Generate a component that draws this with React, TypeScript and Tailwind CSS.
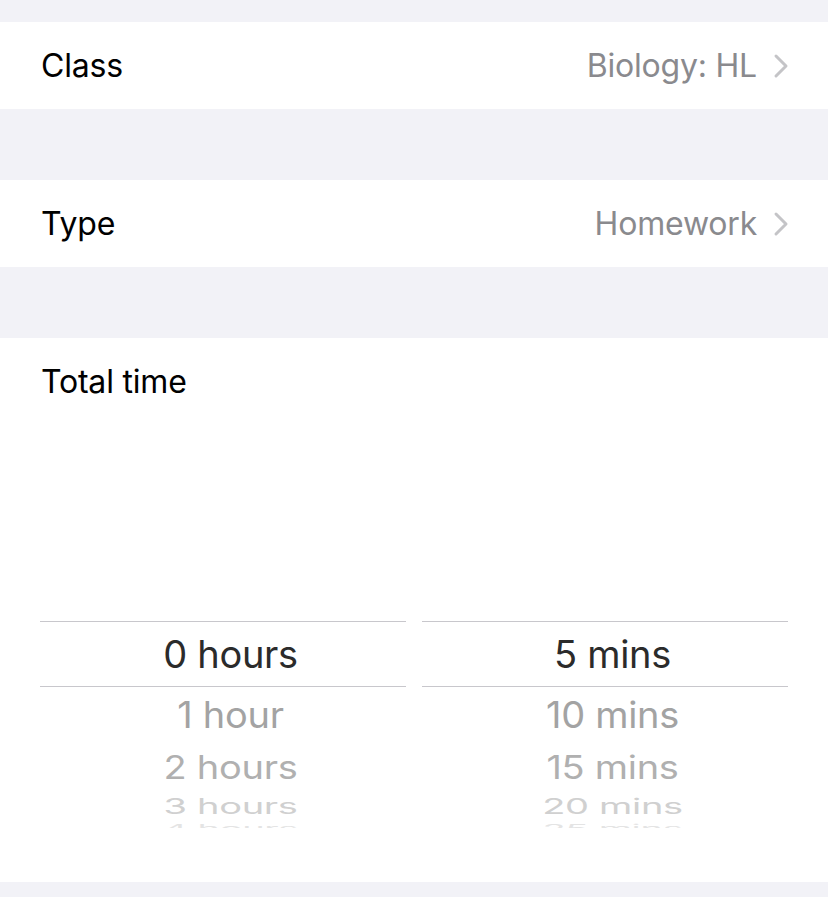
import React from "react";

const Chevron = () => (
  <svg width="16" height="26" viewBox="0 0 16 26" className="shrink-0">
    <path d="M3 3 L13 13 L3 23" fill="none" stroke="#c4c4c7" strokeWidth="3" strokeLinecap="round" strokeLinejoin="round" />
  </svg>
);

const Row = ({ label, value }: { label: string; value: string }) => (
  <div className="h-[87px] bg-white flex items-center justify-between pl-[41px] pr-[39px]">
    <span className="text-[32px] text-black tracking-[-0.2px]">{label}</span>
    <div className="flex items-center gap-[16px]">
      <span className="text-[32px] text-[#8a8a8e] tracking-[-0.2px]">{value}</span>
      <Chevron />
    </div>
  </div>
);

// rows below the selection band, flattened as the wheel turns away
const wheel = [
  { h: "h-[56px]", text: "text-[#a3a3a3]", squash: "scale-y-[0.95]" },
  { h: "h-[48px]", text: "text-[#b0b0b0]", squash: "scale-y-[0.85]" },
  { h: "h-[29px]", text: "text-[#d0d0d0]", squash: "scale-y-[0.55]" },
  { h: "h-[18px]", text: "text-[#e4e4e4]", squash: "scale-y-[0.3]" },
];

const PickerColumn = ({ selected, items }: { selected: string; items: string[] }) => (
  <div className="flex-1 flex flex-col">
    <div className="h-[66px] shrink-0 border-y border-[#c8c7cc] flex items-center justify-center pl-[15px] text-[38px] text-[#2b2b2b] tracking-[-0.3px]">
      {selected}
    </div>
    {items.map((item, i) => (
      <div key={item} className={`${wheel[i].h} shrink-0 flex items-center justify-center pl-[15px]`}>
        <span className={`text-[38px] leading-none tracking-[-0.3px] ${wheel[i].text} ${wheel[i].squash} inline-block`}>{item}</span>
      </div>
    ))}
  </div>
);

export default function App() {
  return (
    <div className="w-[828px] h-[897px] bg-[#f2f2f7] overflow-hidden" style={{ fontFamily: "Inter, 'Open Sans', sans-serif" }}>
      <div className="h-[22px]" />
      <Row label="Class" value="Biology: HL" />
      <div className="h-[71px]" />
      <Row label="Type" value="Homework" />
      <div className="h-[71px]" />
      <div className="bg-white h-[544px] flex flex-col">
        <div className="h-[88px] flex items-center pl-[41px]">
          <span className="text-[32px] text-black tracking-[-0.2px]">Total time</span>
        </div>
        <div className="mt-[195px] h-[207px] overflow-hidden flex gap-[16px] px-[40px]">
          <PickerColumn selected="0 hours" items={["1 hour", "2 hours", "3 hours", "4 hours"]} />
          <PickerColumn selected="5 mins" items={["10 mins", "15 mins", "20 mins", "25 mins"]} />
        </div>
      </div>
    </div>
  );
}
